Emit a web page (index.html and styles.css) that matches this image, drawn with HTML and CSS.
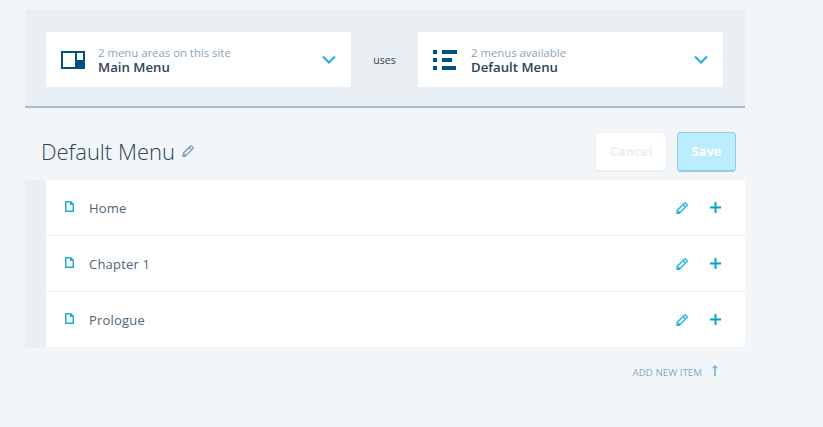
FILE: index.html
```html
<!DOCTYPE html>
<html lang="en">
<head>
<meta charset="utf-8">
<title>Menus</title>
<link rel="stylesheet" href="styles.css">
</head>
<body>
<main class="editor">
  <section class="head">
    <div class="picker">
      <svg class="picker-icon" width="24" height="18" viewBox="0 0 24 18"><path fill="#005082" fill-rule="evenodd" d="M0 0h24v18H0zM2 2v14h12V2zM16 2v7h6V2z"/></svg>
      <div class="picker-text"><span class="picker-sub">2 menu areas on this site</span><span class="picker-name">Main Menu</span></div>
      <svg class="chev" width="14" height="9" viewBox="0 0 14 9"><path fill="none" stroke="#1eaee4" stroke-width="2" d="M1 1.500l6 6 6-6"/></svg>
    </div>
    <span class="uses">uses</span>
    <div class="picker">
      <svg class="picker-icon picker-icon-list" width="24" height="20" viewBox="0 0 24 20"><path fill="#005082" d="M0 0h4v4H0zM9 0h15v4H9zM0 8h4v4H0zM9 8h10v4H9zM0 16h4v4H0zM9 16h14v4H9z"/></svg>
      <div class="picker-text"><span class="picker-sub">2 menus available</span><span class="picker-name">Default Menu</span></div>
      <svg class="chev" width="14" height="9" viewBox="0 0 14 9"><path fill="none" stroke="#1eaee4" stroke-width="2" d="M1 1.500l6 6 6-6"/></svg>
    </div>
  </section>

  <section class="title-row">
    <h1 class="title">Default Menu</h1>
    <svg class="title-edit" width="12" height="12" viewBox="0 0 12 12"><path fill="#7f9db3" d="M0 12l.8-3.600 1 1 1.800 1.800 1 .8z"/><path fill="none" stroke="#7f9db3" stroke-width="1.300" d="M1.300 8.200L8.300 1.200a1 1 0 0 1 1.400 0l1.100 1.100a1 1 0 0 1 0 1.400l-7 7zM7 2.500l2.500 2.500"/></svg>
    <div class="actions">
      <button class="btn btn-cancel" type="button">Cancel</button>
      <button class="btn btn-save" type="button">Save</button>
    </div>
  </section>

  <ul class="items">
    <li class="item">
      <svg class="page" width="9" height="11" viewBox="0 0 9 11"><path fill="none" stroke="#1eaee4" stroke-width="1.500" d="M.75.75h4.500L8.250 3.750v6.500H.75z"/><path fill="#1eaee4" d="M5 0h1l3 3v1H5z"/></svg>
      <span class="item-name">Home</span>
      <svg class="edit" width="12" height="12" viewBox="0 0 12 12"><path fill="#1eaee4" d="M0 12l.8-3.600 1 1 1.800 1.800 1 .8z"/><path fill="none" stroke="#1eaee4" stroke-width="1.300" d="M1.300 8.200L8.300 1.200a1 1 0 0 1 1.400 0l1.100 1.100a1 1 0 0 1 0 1.400l-7 7zM7 2.500l2.500 2.500"/></svg>
      <svg class="plus" width="11" height="11" viewBox="0 0 11 11"><path fill="#00a0d2" d="M4.500 0h2v4.500H11v2H6.500V11h-2V6.500H0v-2h4.500z"/></svg>
    </li>
    <li class="item">
      <svg class="page" width="9" height="11" viewBox="0 0 9 11"><path fill="none" stroke="#1eaee4" stroke-width="1.500" d="M.75.75h4.500L8.250 3.750v6.500H.75z"/><path fill="#1eaee4" d="M5 0h1l3 3v1H5z"/></svg>
      <span class="item-name">Chapter 1</span>
      <svg class="edit" width="12" height="12" viewBox="0 0 12 12"><path fill="#1eaee4" d="M0 12l.8-3.600 1 1 1.800 1.800 1 .8z"/><path fill="none" stroke="#1eaee4" stroke-width="1.300" d="M1.300 8.200L8.300 1.200a1 1 0 0 1 1.400 0l1.100 1.100a1 1 0 0 1 0 1.400l-7 7zM7 2.500l2.500 2.500"/></svg>
      <svg class="plus" width="11" height="11" viewBox="0 0 11 11"><path fill="#00a0d2" d="M4.500 0h2v4.500H11v2H6.500V11h-2V6.500H0v-2h4.500z"/></svg>
    </li>
    <li class="item">
      <svg class="page" width="9" height="11" viewBox="0 0 9 11"><path fill="none" stroke="#1eaee4" stroke-width="1.500" d="M.75.75h4.500L8.250 3.750v6.500H.75z"/><path fill="#1eaee4" d="M5 0h1l3 3v1H5z"/></svg>
      <span class="item-name">Prologue</span>
      <svg class="edit" width="12" height="12" viewBox="0 0 12 12"><path fill="#1eaee4" d="M0 12l.8-3.600 1 1 1.800 1.800 1 .8z"/><path fill="none" stroke="#1eaee4" stroke-width="1.300" d="M1.300 8.200L8.300 1.200a1 1 0 0 1 1.400 0l1.100 1.100a1 1 0 0 1 0 1.400l-7 7zM7 2.500l2.500 2.500"/></svg>
      <svg class="plus" width="11" height="11" viewBox="0 0 11 11"><path fill="#00a0d2" d="M4.500 0h2v4.500H11v2H6.500V11h-2V6.500H0v-2h4.500z"/></svg>
    </li>
  </ul>

  <div class="add-row">
    <span class="add-label">ADD NEW ITEM</span>
    <svg class="add-icon" width="6" height="11" viewBox="0 0 6 11"><path fill="#6ab4dc" d="M2.200 11V2.400L.6 3.600 0 3l3-3 3 3-.6.6-1.600-1.200V11z"/></svg>
  </div>
</main>
</body>
</html>
```
FILE: styles.css
```css
* { box-sizing: border-box; }
html, body { margin: 0; height: 100%; }
body {
  background: #f3f6f9;
  font-family: "Open Sans", "Noto Sans", sans-serif;
  color: #2e4453;
  overflow: hidden;
}
.editor { width: 720px; margin: 10px 0 0 25px; }
.head {
  display: flex;
  align-items: center;
  height: 98px;
  padding: 3px 22px 0 21px;
  background: #e9eff3;
  border-bottom: 2px solid #a8bece;
}
.picker {
  flex: 0 0 305px;
  height: 55px;
  display: flex;
  align-items: center;
  padding: 0 15px;
  background: #fff;
}
.picker-icon { flex: none; margin-right: 13px; }
.picker-icon-list { margin-right: 14px; }
.picker-text { flex: 1; display: flex; flex-direction: column; }
.picker-sub { font-size: 11.350px; line-height: 15px; color: #87a6bc; }
.picker-name { font-size: 13.200px; line-height: 15px; font-weight: 600; color: #2e4453; }
.chev { flex: none; }
.uses { flex: 1; text-align: center; font-size: 10.500px; color: #2e4453; }
.title-row {
  display: flex;
  align-items: center;
  height: 72px;
  padding: 14px 9px 0 16px;
}
.title { margin: 0; font-size: 22px; font-weight: 300; line-height: 30px; color: #2e4453; }
.title-edit { margin-left: 7px; }
.actions { margin: 1px 0 0 auto; display: flex; gap: 10px; }
.btn {
  height: 40px;
  border-radius: 4px;
  font-family: "Open Sans", sans-serif;
  font-size: 13px;
  font-weight: 700;
  padding: 0;
}
.btn-cancel { width: 72px; background: #fff; border: 1px solid #e9eff3; border-bottom-width: 2px; color: #e9eff3; }
.btn-save { width: 59px; background: #bbedff; border: 1px solid #97cde3; border-bottom-width: 2px; color: #fff; }
.items {
  list-style: none;
  margin: 0;
  padding: 0 0 0 21px;
  background: #e9eff3;
}
.item {
  display: flex;
  align-items: center;
  height: 56px;
  padding: 0 24px 0 19px;
  background: #fff;
  border-bottom: 1px solid #e9eff3;
}
.page { flex: none; margin-top: -2px; }
.item-name { flex: 1; margin-left: 15px; font-size: 13px; letter-spacing: .2px; color: #4f6475; }
.edit { flex: none; }
.plus { flex: none; margin-left: 22px; }
.add-row {
  display: flex;
  justify-content: flex-end;
  align-items: center;
  height: 46px;
  padding: 2px 27px 0 0;
}
.add-label { font-size: 9.750px; color: #87a6bc; margin-right: 10px; }
.add-icon { margin-top: -4px; }
```
